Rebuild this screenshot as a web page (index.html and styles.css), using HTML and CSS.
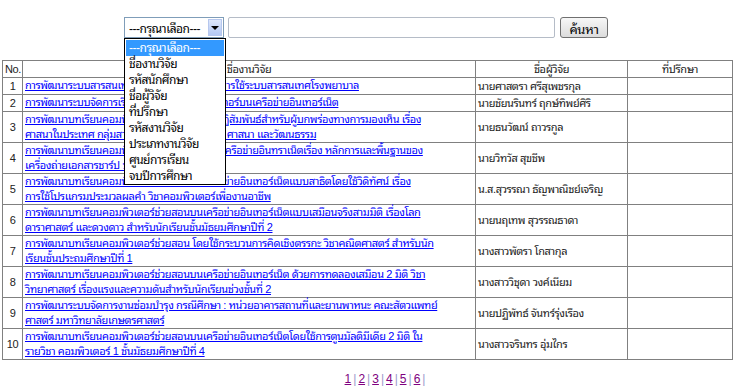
FILE: index.html
```html
<!DOCTYPE html>
<html lang="th">
<head>
    <meta charset="UTF-8">
    <title>ค้นหางานวิจัย</title>
    <link rel="stylesheet" href="styles.css">
</head>
<body>
    <form class="search-bar">
        <div class="fake-select">
            <span class="fake-select-text">---กรุณาเลือก---</span>
            <span class="fake-select-arrow"><span class="tri"></span></span>
            <ul class="fake-select-list">
                <li class="active">---กรุณาเลือก---</li>
                <li>ชื่องานวิจัย</li>
                <li>รหัสนักศึกษา</li>
                <li>ชื่อผู้วิจัย</li>
                <li>ที่ปรึกษา</li>
                <li>รหัสงานวิจัย</li>
                <li>ประเภทงานวิจัย</li>
                <li>ศูนย์การเรียน</li>
                <li>จบปีการศึกษา</li>
            </ul>
        </div>
        <input type="text" class="search-input">
        <button type="button" class="search-button">ค้นหา</button>
    </form>

    <table class="result">
        <tr>
            <th class="col-no">No.</th>
            <th class="col-title">ชื่องานวิจัย</th>
            <th class="col-name">ชื่อผู้วิจัย</th>
            <th class="col-adv">ที่ปรึกษา</th>
        </tr>
        <tr>
            <td class="no">1</td>
            <td class="title"><a href="#">การพัฒนาระบบสารสนเทศเพื่อการจัดการความรู้การใช้ระบบสารสนเทศโรงพยาบาล</a></td>
            <td>นายศาสตรา ศรีสุเพชรกุล</td>
            <td></td>
        </tr>
        <tr>
            <td class="no">2</td>
            <td class="title"><a href="#">การพัฒนาระบบจัดการเรียนการสอนวิชาคอมพิวเตอร์บนเครือข่ายอินเทอร์เน็ต</a></td>
            <td>นายชัยนรินทร์ ฤกษ์ทิพย์ศิริ</td>
            <td></td>
        </tr>
        <tr>
            <td class="no">3</td>
            <td class="title"><a href="#">การพัฒนาบทเรียนคอมพิวเตอร์ช่วยสอนแบบมีปฏิสัมพันธ์สำหรับผู้บกพร่องทางการมองเห็น เรื่อง<br>ศาสนาในประเทศ กลุ่มสาระการเรียนรู้สังคมศึกษา ศาสนา และวัฒนธรรม</a></td>
            <td>นายธนวัฒน์ ถาวรกูล</td>
            <td></td>
        </tr>
        <tr>
            <td class="no">4</td>
            <td class="title"><a href="#">การพัฒนาบทเรียนคอมพิวเตอร์ช่วยฝึกอบรมบนเครือข่ายอินทราเน็ตเรื่อง หลักการและพื้นฐานของ<br>เครื่องถ่ายเอกสารชาร์ป บริษัท ชาร์ป จำกัด</a></td>
            <td>นายวิทวัส สุขชีพ</td>
            <td></td>
        </tr>
        <tr>
            <td class="no">5</td>
            <td class="title"><a href="#">การพัฒนาบทเรียนคอมพิวเตอร์ช่วยสอนบนเครือข่ายอินเทอร์เน็ตแบบสาธิตโดยใช้วิดิทัศน์ เรื่อง<br>การใช้โปรแกรมประมวลผลคำ วิชาคอมพิวเตอร์เพื่องานอาชีพ</a></td>
            <td>น.ส.สุวรรณา ธัญพาณิชย์เจริญ</td>
            <td></td>
        </tr>
        <tr>
            <td class="no">6</td>
            <td class="title"><a href="#">การพัฒนาบทเรียนคอมพิวเตอร์ช่วยสอนบนเครือข่ายอินเทอร์เน็ตแบบเสมือนจริงสามมิติ เรื่องโลก<br>ดาราศาสตร์ และดวงดาว สำหรับนักเรียนชั้นมัธยมศึกษาปีที่ 2</a></td>
            <td>นายนฤเทพ สุวรรณธาดา</td>
            <td></td>
        </tr>
        <tr>
            <td class="no">7</td>
            <td class="title"><a href="#">การพัฒนาบทเรียนคอมพิวเตอร์ช่วยสอน โดยใช้กระบวนการคิดเชิงตรรกะ วิชาคณิตศาสตร์ สำหรับนัก<br>เรียนชั้นประถมศึกษาปีที่ 1</a></td>
            <td>นางสาวพัตรา โกสากุล</td>
            <td></td>
        </tr>
        <tr>
            <td class="no">8</td>
            <td class="title"><a href="#">การพัฒนาบทเรียนคอมพิวเตอร์ช่วยสอนบนเครือข่ายอินเทอร์เน็ต ด้วยการทดลองเสมือน 2 มิติ วิชา<br>วิทยาศาสตร์ เรื่องแรงและความดันสำหรับนักเรียนช่วงชั้นที่ 2</a></td>
            <td>นางสาววิชุดา วงค์เนียม</td>
            <td></td>
        </tr>
        <tr>
            <td class="no">9</td>
            <td class="title"><a href="#">การพัฒนาระบบจัดการงานซ่อมบำรุง กรณีศึกษา : หน่วยอาคารสถานที่และยานพาหนะ คณะสัตวแพทย์<br>ศาสตร์ มหาวิทยาลัยเกษตรศาสตร์</a></td>
            <td>นายปฏิพัทธ์ จันทร์รุ่งเรือง</td>
            <td></td>
        </tr>
        <tr>
            <td class="no">10</td>
            <td class="title"><a href="#">การพัฒนาบทเรียนคอมพิวเตอร์ช่วยสอนบนเครือข่ายอินเทอร์เน็ตโดยใช้การตูนมัลติมีเดีย 2 มิติ ใน<br>รายวิชา คอมพิวเตอร์ 1 ชั้นมัธยมศึกษาปีที่ 4</a></td>
            <td>นางสาวจรินทร อุ่มไกร</td>
            <td></td>
        </tr>
    </table>

    <div class="pager">
        <a href="#">1</a><span class="sep">|</span><a href="#">2</a><span class="sep">|</span><a href="#">3</a><span class="sep">|</span><a href="#">4</a><span class="sep">|</span><a href="#">5</a><span class="sep">|</span><a href="#">6</a><span class="sep">|</span>
    </div>
</body>
</html>
```

FILE: styles.css
```css
body {
    margin: 0;
    padding: 0;
    background-color: #fff;
    color: #222;
    font-family: "Liberation Sans", "Noto Sans Thai Looped", sans-serif;
    font-size: 11px;
    letter-spacing: -0.4px;
}

.search-bar {
    display: flex;
    justify-content: center;
    align-items: center;
    gap: 4px;
    margin: 0;
    padding: 17px 8px 0 0;
    height: 21px;
}

/* the select box, drawn open */
.fake-select {
    position: relative;
    width: 98px;
    height: 19px;
    border: 1px solid #7f9db9;
    display: flex;
    align-items: center;
    justify-content: space-between;
    color: #000;
    font-size: 12px;
    letter-spacing: -0.5px;
}
.fake-select-text {
    padding-left: 4px;
    white-space: nowrap;
}
.fake-select-arrow {
    flex-shrink: 0;
    width: 14px;
    height: 17px;
    margin-right: 1px;
    border: 1px solid #b6c7ee;
    background: linear-gradient(#dde7fb, #b4c8f3);
    display: flex;
    align-items: center;
    justify-content: center;
    box-sizing: border-box;
}
.tri {
    width: 0;
    height: 0;
    border-left: 4px solid transparent;
    border-right: 4px solid transparent;
    border-top: 4px solid #000;
}
.fake-select-list {
    position: absolute;
    top: 20px;
    left: -1px;
    width: 98px;
    margin: 0;
    padding: 1px 1px 0;
    list-style: none;
    background: #fff;
    border: 1px solid #000;
    z-index: 5;
}
.fake-select-list li {
    height: 16px;
    line-height: 16px;
    padding-left: 3px;
    white-space: nowrap;
    color: #000;
}
.fake-select-list li.active {
    background: #3399ff;
    color: #fff;
}

.search-input {
    width: 327px;
    height: 21px;
    box-sizing: border-box;
    border: 1px solid #b5bcc7;
    border-radius: 2px;
    margin: 0 1px 0 0;
    padding: 0 3px;
}
.search-button {
    width: 48px;
    height: 21px;
    box-sizing: border-box;
    border: 1px solid #707070;
    border-radius: 3px;
    background: linear-gradient(#f7f7f7, #dcdcdc);
    font-family: "Liberation Sans", "Noto Sans Thai Looped", sans-serif;
    font-size: 13px;
    letter-spacing: -0.3px;
    color: #000;
    padding: 0;
}

.result {
    border-collapse: collapse;
    width: 731px;
    margin: 22px 0 0 2px;
    table-layout: fixed;
}
.result th, .result td {
    border: 1px solid #808080;
    padding: 0 2px;
    height: 16px;
    line-height: 15px;
    font-weight: normal;
    vertical-align: middle;
}
.result th {
    text-align: center;
}
.result th.col-no {
    text-align: left;
}
.col-no { width: 15px; }
.col-title { width: 448px; }
.col-name { width: 147px; }
.result td.no {
    text-align: center;
}
.result td.title {
    vertical-align: top;
    white-space: nowrap;
}
.result td.title a {
    color: #0000ff;
}

.pager {
    text-align: center;
    padding: 12px 0 0 32px;
    font-size: 12px;
    letter-spacing: 0;
}
.pager a {
    color: #800080;
}
.pager .sep {
    color: #9999cc;
    margin: 0 2px;
}
```
